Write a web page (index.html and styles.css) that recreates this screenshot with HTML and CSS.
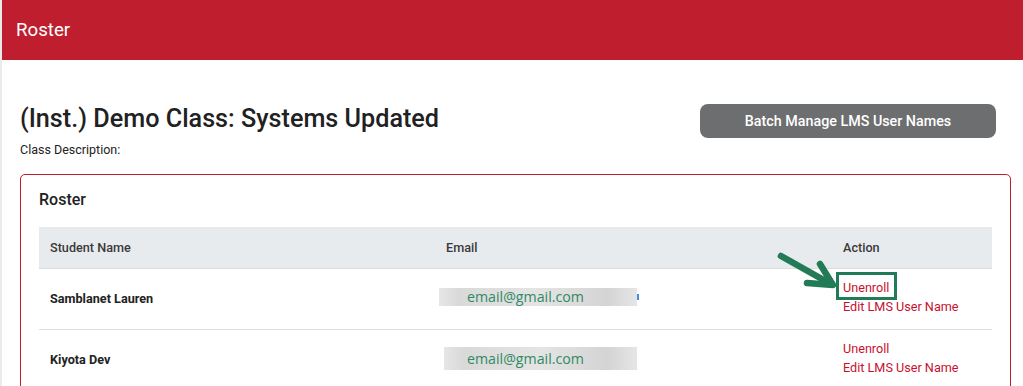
FILE: index.html
```html
<!DOCTYPE html>
<html>
<head>
<meta charset="utf-8">
<link rel="stylesheet" href="styles.css">
</head>
<body>
<header class="topbar">Roster</header>
<main class="page">
  <div class="head">
    <div class="titles">
      <h1 class="title">(Inst.) Demo Class: Systems Updated</h1>
      <div class="desc">Class Description:</div>
    </div>
    <button class="batch">Batch Manage LMS User Names</button>
  </div>
  <section class="card">
    <h2 class="card-title">Roster</h2>
    <table class="roster">
      <thead>
        <tr><th class="c-name">Student Name</th><th class="c-email">Email</th><th class="c-action">Action</th></tr>
      </thead>
      <tbody>
        <tr>
          <td class="name">Samblanet Lauren</td>
          <td><span class="email e1">email@gmail.com<span class="tick"></span></span></td>
          <td class="actions">
            <a class="link hl">Unenroll<svg class="arrow" width="64" height="44" viewBox="0 0 64 44"><path d="M5 8 L53 35" stroke="#237a57" stroke-width="6.5" stroke-linecap="round" fill="none"/><path d="M44 16 L57 37 L31 35" stroke="#237a57" stroke-width="6.5" stroke-linecap="round" stroke-linejoin="round" fill="none"/></svg></a>
            <a class="link">Edit LMS User Name</a>
          </td>
        </tr>
        <tr>
          <td class="name">Kiyota Dev</td>
          <td><span class="email e2">email@gmail.com</span></td>
          <td class="actions"><a class="link">Unenroll</a><a class="link">Edit LMS User Name</a></td>
        </tr>
      </tbody>
    </table>
  </section>
</main>
</body>
</html>
```
FILE: styles.css
```css
* { box-sizing: border-box; }
html, body { margin: 0; padding: 0; }
body {
  font-family: Roboto, "Liberation Sans", sans-serif;
  color: #222;
  background: #fff;
  border-left: 2px solid #ebebeb;
  height: 386px;
  overflow: hidden;
}
.topbar {
  height: 60px;
  margin-left: -2px;
  background: #be1e2d;
  color: #fff;
  font-size: 18.7px;
  line-height: 60px;
  padding-left: 16px;
}
.page { padding: 44px 12px 0 18px; }
.head { display: flex; justify-content: space-between; align-items: flex-start; }
.title { margin: 0; font-size: 25.2px; font-weight: 500; line-height: 30px; color: #212121; }
.desc { font-size: 12.5px; margin-top: 8px; color: #222; }
.batch {
  margin-top: 0; margin-right: 15px;
  width: 296px; height: 34px;
  background: #6d6e70; color: #fff;
  border: 0; border-radius: 8px;
  font-family: Roboto, "Liberation Sans", sans-serif;
  font-size: 14.3px; font-weight: 500;
}
.card {
  margin-top: 17px;
  border: 1px solid #be1e2d;
  border-radius: 5px;
  padding: 16px 18px 0 18px;
  height: 230px;
}
.card-title { margin: 0 0 18px 0; font-size: 16px; font-weight: 500; line-height: 18px; }
.roster { width: 100%; border-collapse: collapse; font-size: 12.65px; }
.roster th {
  background: #e8ebee; height: 41px; text-align: left;
  font-weight: 500; color: #3a3a3a; padding: 0 11px;
  border-bottom: 1px solid #dcdcdc;
}
.c-name { width: 396px; }
.c-email { width: 397px; }
.roster td { height: 61px; padding: 0 11px; border-bottom: 1px solid #dcdcdc; vertical-align: middle; }
.name { font-weight: 700; color: #222; }
.email {
  display: block; position: relative;
  font-family: "Open Sans", "Noto Sans", sans-serif;
  font-size: 14.2px; color: #2f8a64;
  margin-bottom: 3px;
  background: linear-gradient(90deg, #e6e6e6 0%, #d9d9d9 10%, #e4e4e4 50%, #d4d4d4 85%, #e6e6e6 100%);
}
.e1 { margin-left: -7px; padding: 0 0 0 28px; width: 198px; height: 18px; line-height: 18px; }
.e2 { margin-left: -2px; padding: 0 0 0 23px; width: 193px; height: 23px; line-height: 23px; }
.tick { position: absolute; right: -2px; top: 6px; width: 2px; height: 6px; background: #4a90d9; }
.roster td.actions { padding-bottom: 4px; }
.actions .link { display: block; color: #c8102e; line-height: 19px; }
.actions .hl {
  position: relative;
  width: fit-content;
  border: 3px solid #237a57;
  padding: 3px 5px 0 4px;
  margin: -6px 0 -3px -7px;
}
.arrow { position: absolute; left: -63px; top: -27px; }
```
